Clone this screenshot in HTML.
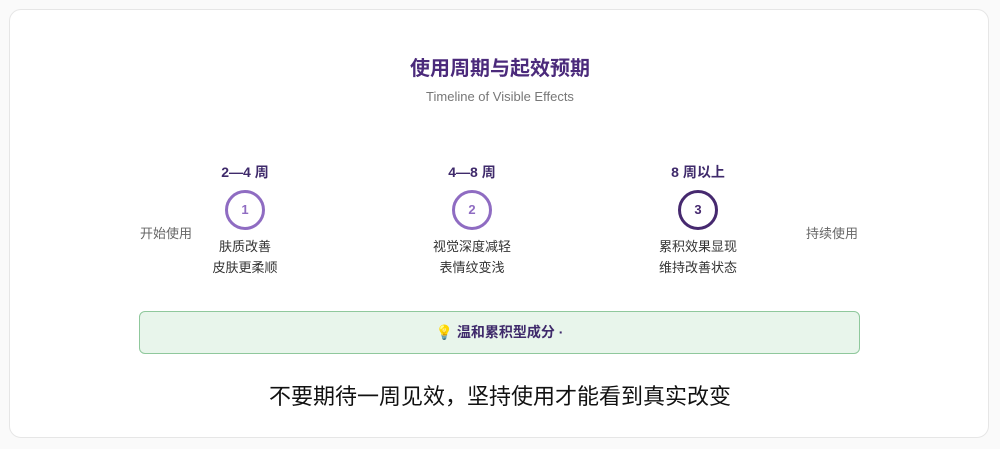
<!DOCTYPE html>
<html><head><meta charset="utf-8"><style>
*{margin:0;padding:0;box-sizing:border-box}
body{width:1000px;height:449px;background:#fafafa;font-family:"Liberation Sans","Noto Sans CJK SC",sans-serif;position:relative;overflow:hidden}
.card{position:absolute;left:9px;top:9px;width:980px;height:429px;background:#fff;border:1px solid #e6e6e6;border-radius:12px}
.abs{position:absolute;white-space:nowrap}
.t{left:0;width:1000px;text-align:center}
.step{position:absolute;width:160px;text-align:center}
.wk{font-size:14px;font-weight:bold;color:#3f2a6b;height:20px;line-height:20px}
.c{width:40px;height:40px;border-radius:50%;border:3px solid #8f6cc2;margin:8px auto 0;font-size:13px;font-weight:bold;color:#8f6cc2;line-height:34px}
.d{font-size:13px;color:#333;line-height:21px;margin-top:6px}
.side{font-size:13px;color:#666}
</style></head><body>
<div class="card"></div>
<div class="abs t" style="top:52px;font-size:20px;font-weight:bold;color:#4b2a7b">使用周期与起效预期</div>
<div class="abs t" style="top:89px;font-size:13px;color:#777">Timeline of Visible Effects</div>
<div class="abs side" style="left:140px;top:223px">开始使用</div>
<div class="abs side" style="left:806px;top:223px">持续使用</div>
<div class="step" style="left:165px;top:162px"><div class="wk">2—4 周</div><div class="c">1</div><div class="d">肤质改善<br>皮肤更柔顺</div></div>
<div class="step" style="left:392px;top:162px"><div class="wk">4—8 周</div><div class="c">2</div><div class="d">视觉深度减轻<br>表情纹变浅</div></div>
<div class="step" style="left:618px;top:162px"><div class="wk">8 周以上</div><div class="c" style="border-color:#46296f;color:#46296f">3</div><div class="d">累积效果显现<br>维持改善状态</div></div>
<div class="abs" style="left:139px;top:311px;width:721px;height:43px;background:#e8f5eb;border:1.5px solid #8fc89c;border-radius:6px;text-align:center;line-height:40px;font-size:14px;font-weight:bold;color:#3f2a6b">💡 温和累积型成分 ·</div>
<div class="abs t" style="top:379px;font-size:22px;color:#111">不要期待一周见效，坚持使用才能看到真实改变</div>
</body></html>
